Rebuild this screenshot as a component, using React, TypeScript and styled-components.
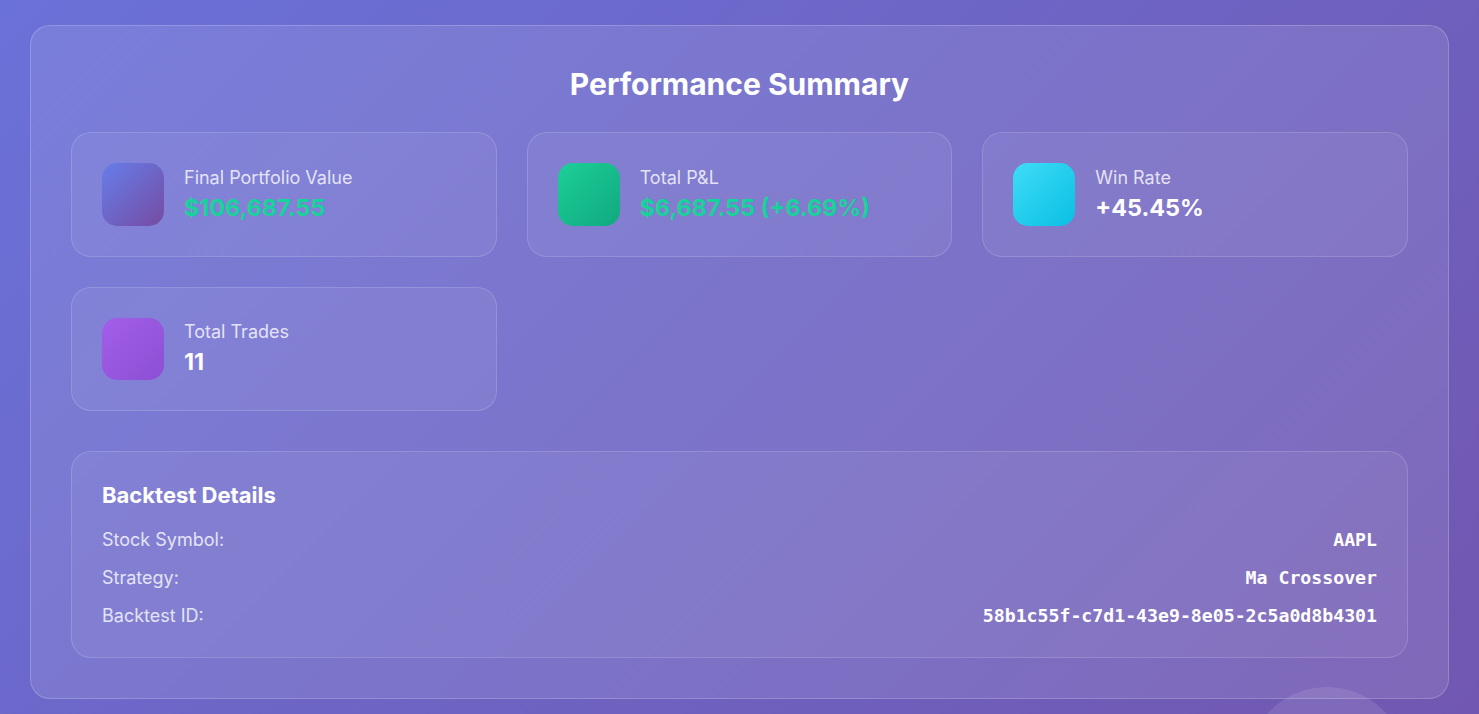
import React from "react";
import styled, { createGlobalStyle } from "styled-components";

const GlobalStyle = createGlobalStyle`
  * { box-sizing: border-box; }
  html, body { margin: 0; padding: 0; }
  body {
    font-family: Inter, "Noto Sans", sans-serif;
    background: linear-gradient(135deg, #6a71d8 0%, #7157b0 100%);
    min-height: 714px;
    overflow: hidden;
  }
`;

const Page = styled.div`
  position: relative;
  min-height: 714px;
  padding: 25px 30px;
  overflow: hidden;
`;

const FloatCircle = styled.div`
  position: absolute;
  left: 1247px;
  top: 687px;
  width: 160px;
  height: 160px;
  border-radius: 50%;
  background: rgba(255, 255, 255, 0.1);
  pointer-events: none;
`;

const Panel = styled.section`
  background: rgba(255, 255, 255, 0.1);
  border: 1px solid rgba(255, 255, 255, 0.2);
  border-radius: 20px;
  padding: 40px;
`;

const Title = styled.h2`
  margin: 0 0 30px;
  text-align: center;
  color: #ffffff;
  font-size: 30px;
  line-height: 36px;
  font-weight: 700;
`;

const StatsGrid = styled.div`
  display: grid;
  grid-template-columns: repeat(3, 1fr);
  gap: 30px;
`;

const StatCard = styled.div`
  display: flex;
  align-items: center;
  gap: 20px;
  padding: 30px;
  background: rgba(255, 255, 255, 0.06);
  border: 1px solid rgba(255, 255, 255, 0.15);
  border-radius: 20px;
`;

const IconBox = styled.div<{ $from: string; $to: string }>`
  flex: 0 0 62px;
  width: 62px;
  height: 62.5px;
  border-radius: 15px;
  background: linear-gradient(135deg, ${(p) => p.$from} 0%, ${(p) => p.$to} 100%);
`;

const StatText = styled.div`
  display: flex;
  flex-direction: column;
  gap: 4px;
`;

const StatLabel = styled.div`
  color: rgba(255, 255, 255, 0.8);
  font-size: 18px;
  line-height: 22px;
`;

const StatValue = styled.div<{ $color: string }>`
  color: ${(p) => p.$color};
  font-size: 23.4px;
  line-height: 29px;
  font-weight: 700;
`;

const Details = styled.div`
  margin-top: 39.5px;
  padding: 30px;
  background: rgba(255, 255, 255, 0.06);
  border: 1px solid rgba(255, 255, 255, 0.15);
  border-radius: 20px;
`;

const DetailsTitle = styled.h3`
  margin: 0 0 21px;
  color: #ffffff;
  font-size: 22px;
  line-height: 26px;
  font-weight: 700;
`;

const DetailList = styled.div`
  display: flex;
  flex-direction: column;
  gap: 16px;
`;

const DetailRow = styled.div`
  display: flex;
  justify-content: space-between;
  align-items: center;
  height: 22px;
`;

const DetailLabel = styled.span`
  color: rgba(255, 255, 255, 0.8);
  font-size: 18px;
`;

const DetailValue = styled.span`
  color: #ffffff;
  font-family: "DejaVu Sans Mono", "Liberation Mono", monospace;
  font-size: 18.2px;
  font-weight: 700;
`;

const stats = [
  { label: "Final Portfolio Value", value: "$106,687.55", color: "#16d39a", from: "#667eea", to: "#764ba2" },
  { label: "Total P&L", value: "$6,687.55 (+6.69%)", color: "#16d39a", from: "#1ccf98", to: "#10a97e" },
  { label: "Win Rate", value: "+45.45%", color: "#ffffff", from: "#3fdcf7", to: "#0abfe3" },
  { label: "Total Trades", value: "11", color: "#ffffff", from: "#a35ee9", to: "#8c4fd4" },
];

const details = [
  { label: "Stock Symbol:", value: "AAPL" },
  { label: "Strategy:", value: "Ma Crossover" },
  { label: "Backtest ID:", value: "58b1c55f-c7d1-43e9-8e05-2c5a0d8b4301" },
];

export default function App() {
  return (
    <>
      <GlobalStyle />
      <Page>
        <Panel>
          <Title>Performance Summary</Title>
          <StatsGrid>
            {stats.map((s) => (
              <StatCard key={s.label}>
                <IconBox $from={s.from} $to={s.to} />
                <StatText>
                  <StatLabel>{s.label}</StatLabel>
                  <StatValue $color={s.color}>{s.value}</StatValue>
                </StatText>
              </StatCard>
            ))}
          </StatsGrid>
          <Details>
            <DetailsTitle>Backtest Details</DetailsTitle>
            <DetailList>
              {details.map((d) => (
                <DetailRow key={d.label}>
                  <DetailLabel>{d.label}</DetailLabel>
                  <DetailValue>{d.value}</DetailValue>
                </DetailRow>
              ))}
            </DetailList>
          </Details>
        </Panel>
        <FloatCircle />
      </Page>
    </>
  );
}
